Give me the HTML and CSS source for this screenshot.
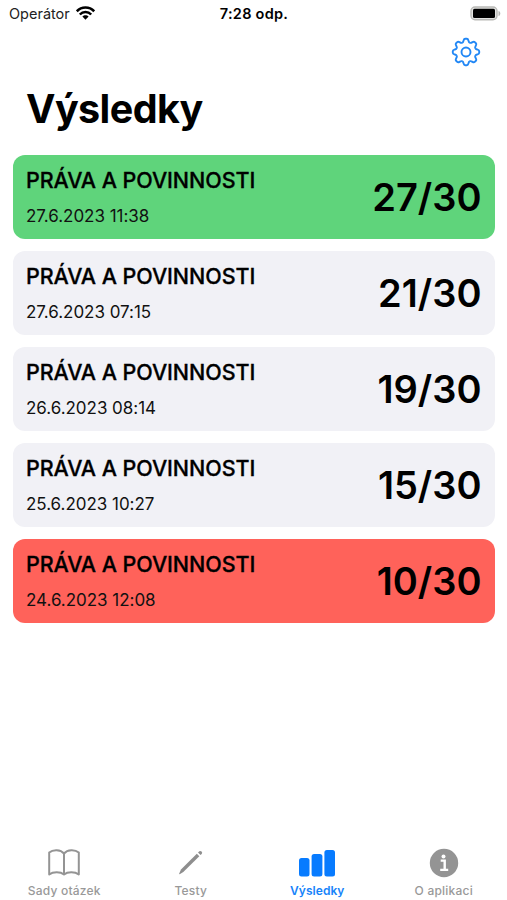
FILE: index.html
```html
<!DOCTYPE html>
<html lang="cs">
<head>
<meta charset="utf-8">
<title>Výsledky</title>
<link rel="stylesheet" href="styles.css">
</head>
<body>
<header class="status">
  <div class="carrier"><span>Operátor</span>
    <svg class="wifi" width="19" height="14" viewBox="0 0 19 14" fill="none" stroke="#000" stroke-width="2.500"><path d="M.8 5.300C5.500.3 13.500.3 18.200 5.300"/><path d="M3.800 8.500c3.200-3.300 8.200-3.300 11.400 0"/><path d="M6.400 10.600c1.600-1.700 4.600-1.700 6.200 0L9.500 13.800z" fill="#000" stroke="none"/></svg>
  </div>
  <div class="clock">7:28 odp.</div>
  <svg class="battery" width="31" height="15" viewBox="0 0 31 15"><rect x="1" y="1" width="26" height="12.800" rx="4" fill="#e4e4e2" stroke="#b9b9b6" stroke-width="1.400"/><rect x="3" y="2.700" width="22" height="9.400" rx="1.500" fill="#000"/><path d="M28.500 5c2.400.6 2.400 4.400 0 5z" fill="#b5b5b2"/></svg>
</header>
<nav class="toolbar">
  <svg width="30" height="30" viewBox="-15 -15 30 30" fill="none" stroke="#2187f5" stroke-width="1.900">
    <defs><path id="tooth" d="M-3.830-9.240C-2.700-9.700-2.700-10.400-2.400-11.600Q-2-13.200-.8-13.200H.8Q2-13.200 2.400-11.600C2.700-10.400 2.700-9.700 3.830-9.240"/></defs>
    <use href="#tooth"/><use href="#tooth" transform="rotate(45)"/><use href="#tooth" transform="rotate(90)"/><use href="#tooth" transform="rotate(135)"/><use href="#tooth" transform="rotate(180)"/><use href="#tooth" transform="rotate(225)"/><use href="#tooth" transform="rotate(270)"/><use href="#tooth" transform="rotate(315)"/>
    <circle r="4.500"/>
  </svg>
</nav>
<h1>Výsledky</h1>
<main class="results">
  <article class="card pass"><div><h2>PRÁVA A POVINNOSTI</h2><time>27.6.2023 11:38</time></div><strong>27/30</strong></article>
  <article class="card"><div><h2>PRÁVA A POVINNOSTI</h2><time>27.6.2023 07:15</time></div><strong>21/30</strong></article>
  <article class="card"><div><h2>PRÁVA A POVINNOSTI</h2><time>26.6.2023 08:14</time></div><strong>19/30</strong></article>
  <article class="card"><div><h2>PRÁVA A POVINNOSTI</h2><time>25.6.2023 10:27</time></div><strong>15/30</strong></article>
  <article class="card fail"><div><h2>PRÁVA A POVINNOSTI</h2><time>24.6.2023 12:08</time></div><strong>10/30</strong></article>
</main>
<footer class="tabs">
  <div class="tab"><svg width="34" height="30" viewBox="0 0 34 30" fill="none" stroke="#949494" stroke-width="2" stroke-linejoin="round"><path d="M17 5.500C13.500 1.200 6 1.200 2.200 4.500V26.500C6 23.500 13.500 23.500 17 26.500C20.500 23.500 28 23.500 31.800 26.500V4.500C28 1.200 20.500 1.200 17 5.500zV26.500"/></svg><span>Sady otázek</span></div>
  <div class="tab"><svg width="34" height="30" viewBox="0 0 34 30" fill="#8e8e8e"><path d="M22.800 5.700 25.300 8.200 9.300 24 5.700 26.200Q5 26.300 5.200 25.500L7 21.400z"/><path d="M24 4.600 25.400 3.300Q26.500 2.500 27.600 3.600T27.700 5.900L26.500 7.100z"/></svg><span>Testy</span></div>
  <div class="tab active"><svg width="38" height="30" viewBox="0 0 38 30" fill="#077bff"><rect x="1" y="10" width="10.500" height="18.500" rx="2.500"/><rect x="13.600" y="6" width="10.800" height="22.500" rx="2.500"/><rect x="26.400" y="2" width="10.600" height="26.500" rx="2.500"/></svg><span>Výsledky</span></div>
  <div class="tab"><svg width="30" height="30" viewBox="0 0 30 30"><circle cx="15" cy="15" r="14.200" fill="#949494"/><circle cx="14.500" cy="8.400" r="2" fill="#fff"/><path d="M11.700 12.600h4v9M11.200 21.900h8" fill="none" stroke="#fff" stroke-width="2.400"/></svg><span>O aplikaci</span></div>
</footer>
</body>
</html>
```

FILE: styles.css
```css
* { box-sizing: border-box; }
body {
  margin: 0;
  width: 507px;
  height: 900px;
  overflow: hidden;
  display: flex;
  flex-direction: column;
  background: #fff;
  color: #000;
  font-family: Inter, "Liberation Sans", sans-serif;
}
svg { display: block; flex: none; }
.status {
  height: 27px;
  padding: 0 8px 0 9px;
  display: grid;
  grid-template-columns: 1fr auto 1fr;
  align-items: center;
  font-size: 14.5px;
}
.carrier { display: flex; align-items: center; gap: 6px; color: #222; }
.wifi { margin-top: -2px; }
.clock { font-weight: 600; letter-spacing: .25px; }
.battery { justify-self: end; margin: -1px -2px 0 0; }
.toolbar {
  height: 49px;
  padding: 10px 26px 0;
  display: flex;
  justify-content: flex-end;
}
h1 {
  margin: 0;
  height: 79px;
  padding: 8px 26px 0;
  font-size: 39.5px;
  line-height: 50px;
  font-weight: 700;
  letter-spacing: -.6px;
}
.results { display: flex; flex-direction: column; gap: 12.5px; padding: 0 12.5px 0 13px; }
.card {
  height: 83.5px;
  border-radius: 12px;
  padding: 0 13px;
  display: flex;
  align-items: center;
  justify-content: space-between;
  background: #f1f1f6;
}
.pass { background: #5fd47b; }
.fail { background: #ff625a; }
h2 {
  margin: 0 0 12.5px;
  font-size: 21.5px;
  line-height: 25px;
  font-weight: 500;
  letter-spacing: -.07px;
  -webkit-text-stroke: .3px #000;
}
time { display: block; font-size: 17px; line-height: 20px; letter-spacing: -.03px; color: #111; }
strong { padding-top: 1px; font-size: 38px; line-height: 48px; font-weight: 600; letter-spacing: 0; }
.tabs { margin-top: auto; height: 52px; padding: 0 0 1px 1px; display: flex; }
.tab {
  flex: 1;
  display: flex;
  flex-direction: column;
  align-items: center;
  gap: 5px;
  color: #999;
  font-size: 12px;
  line-height: 16px;
  font-weight: 500;
  letter-spacing: .22px;
}
.active { color: #1683fa; font-weight: 600; letter-spacing: .05px; }
```
